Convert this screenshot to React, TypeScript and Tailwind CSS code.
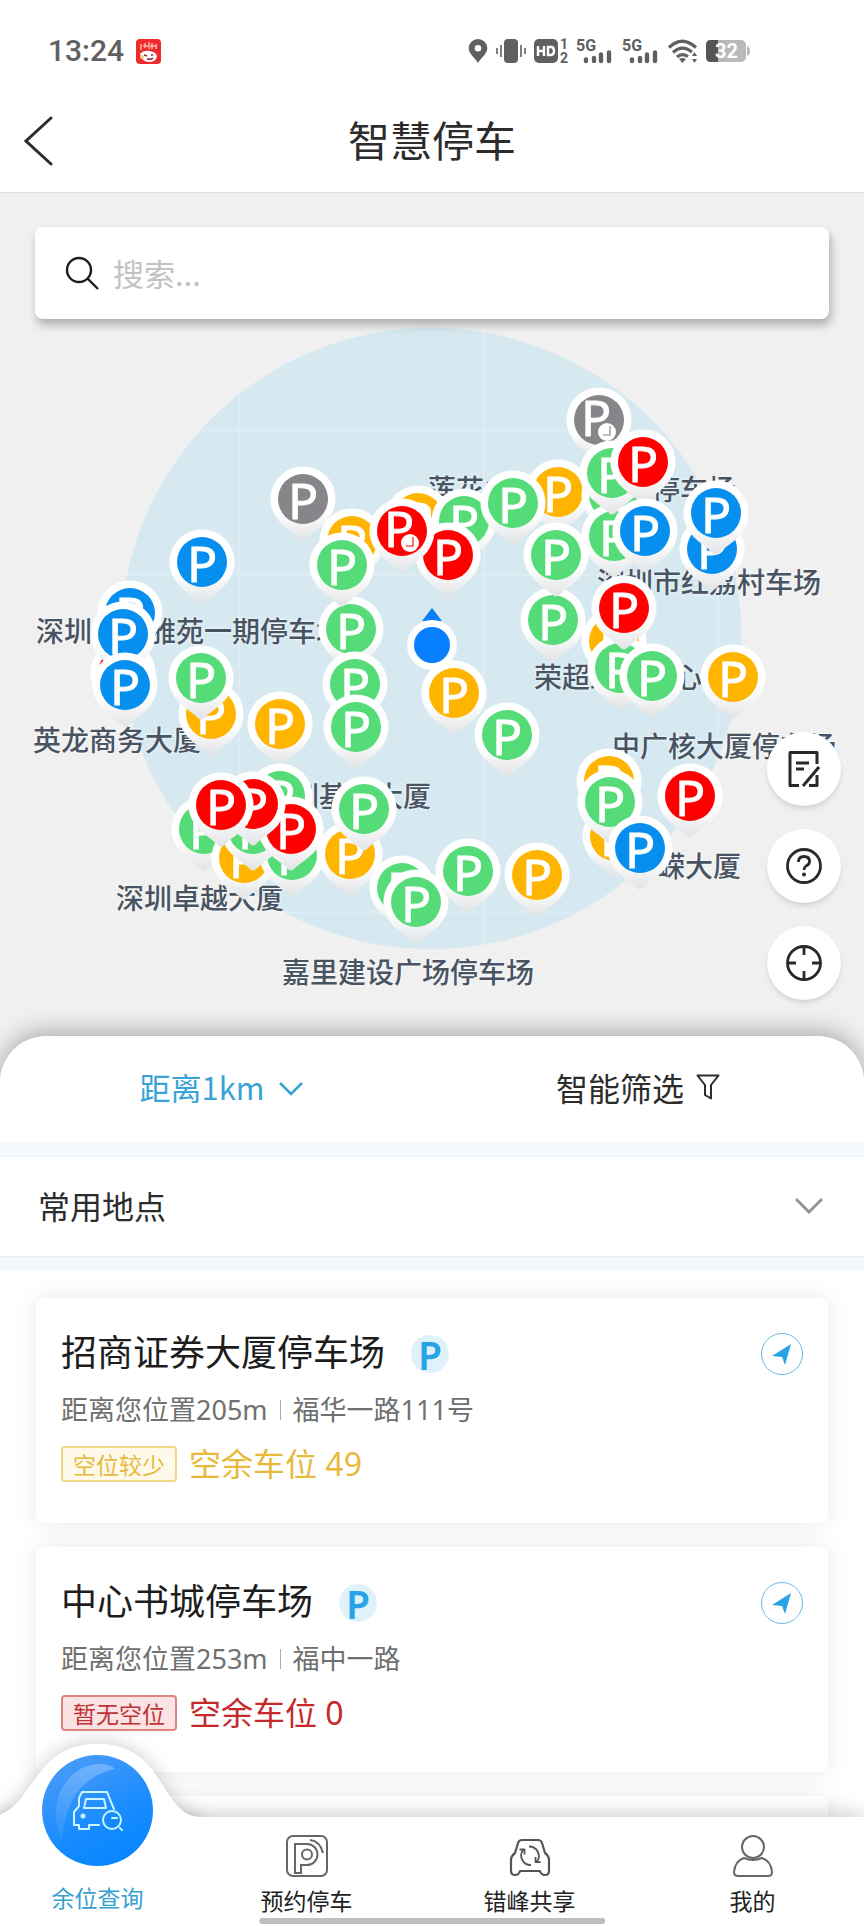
import React from "react";

type Kind = "blue" | "green" | "yellow" | "red" | "gray";
type Pin = { x: number; y: number; kind: Kind; timed?: boolean };

const fills: Record<Kind, string> = {
  blue: "#068fee",
  green: "#55db77",
  yellow: "#ffb400",
  red: "#fe0000",
  gray: "#85858a",
};

const pins: Pin[] = [
  { x: 303, y: 498, kind: "gray" },
  { x: 418, y: 517, kind: "yellow" },
  { x: 464, y: 520, kind: "green" },
  { x: 448, y: 554, kind: "red" },
  { x: 352, y: 540, kind: "yellow" },
  { x: 402, y: 530, kind: "red", timed: true },
  { x: 558, y: 491, kind: "yellow" },
  { x: 513, y: 502, kind: "green" },
  { x: 202, y: 561, kind: "blue" },
  { x: 351, y: 628, kind: "green" },
  { x: 342, y: 564, kind: "green" },
  { x: 355, y: 683, kind: "green" },
  { x: 356, y: 726, kind: "green" },
  { x: 123, y: 672, kind: "red" },
  { x: 130, y: 612, kind: "blue" },
  { x: 123, y: 633, kind: "blue" },
  { x: 125, y: 684, kind: "blue" },
  { x: 211, y: 713, kind: "yellow" },
  { x: 201, y: 677, kind: "green" },
  { x: 599, y: 419, kind: "gray", timed: true },
  { x: 614, y: 494, kind: "green" },
  { x: 614, y: 535, kind: "green" },
  { x: 612, y: 472, kind: "green" },
  { x: 643, y: 461, kind: "red" },
  { x: 645, y: 530, kind: "blue" },
  { x: 712, y: 548, kind: "blue" },
  { x: 716, y: 512, kind: "blue" },
  { x: 553, y: 619, kind: "green" },
  { x: 556, y: 554, kind: "green" },
  { x: 614, y: 640, kind: "yellow" },
  { x: 620, y: 667, kind: "green" },
  { x: 624, y: 607, kind: "red" },
  { x: 652, y: 675, kind: "green" },
  { x: 733, y: 676, kind: "yellow" },
  { x: 454, y: 692, kind: "yellow" },
  { x: 280, y: 723, kind: "yellow" },
  { x: 507, y: 734, kind: "green" },
  { x: 280, y: 795, kind: "green" },
  { x: 204, y: 828, kind: "green" },
  { x: 244, y: 857, kind: "yellow" },
  { x: 292, y: 854, kind: "green" },
  { x: 253, y: 828, kind: "green" },
  { x: 291, y: 828, kind: "red" },
  { x: 253, y: 803, kind: "red" },
  { x: 221, y: 804, kind: "red" },
  { x: 350, y: 853, kind: "yellow" },
  { x: 364, y: 808, kind: "green" },
  { x: 402, y: 887, kind: "green" },
  { x: 416, y: 901, kind: "green" },
  { x: 468, y: 870, kind: "green" },
  { x: 537, y: 874, kind: "yellow" },
  { x: 615, y: 835, kind: "yellow" },
  { x: 609, y: 780, kind: "yellow" },
  { x: 610, y: 801, kind: "green" },
  { x: 640, y: 847, kind: "blue" },
  { x: 690, y: 795, kind: "red" },
];

const places = [
  { x: 428, y: 487, name: "莲花山公园东南门停车场" },
  { x: 597, y: 580, name: "深圳市红荔村车场" },
  { x: 36, y: 629, name: "深圳城中雅苑一期停车场" },
  { x: 534, y: 675, name: "荣超经贸中心" },
  { x: 612, y: 744, name: "中广核大厦停车场" },
  { x: 33, y: 738, name: "英龙商务大厦" },
  { x: 263, y: 794, name: "深圳基金大厦" },
  { x: 657, y: 864, name: "嵘大厦" },
  { x: 116, y: 896, name: "深圳卓越大厦" },
  { x: 282, y: 970, name: "嘉里建设广场停车场" },
];

const MAP_TOP = 192;

function MapPin({ pin }: { pin: Pin }) {
  const fill = fills[pin.kind];
  return (
    <svg
      className="absolute h-20 w-[68px]"
      style={{ left: pin.x - 34, top: pin.y - MAP_TOP - 34 }}
      viewBox="-34 -34 68 80"
      aria-hidden="true"
    >
      <path d="M-27 18A32.500 32.500 0 1 1 27 18C22 27 11 32 3 40Q0 43-3 40C-11 32-22 27-27 18Z" fill="url(#pinShade)" />
      <circle r="25" fill={fill} />
      <text
        x={pin.timed ? -18 : -15}
        y={pin.timed ? 16 : 20}
        fontSize="50"
        fontFamily="'Noto Sans', sans-serif"
        fill="#fff"
        stroke="#fff"
        strokeWidth="0.800"
      >
        P
      </text>
      {pin.timed && (
        <g>
          <circle cx="8" cy="12" r="9" fill="#fff" />
          <path d="M11 6V15H4" fill="none" stroke={fill} strokeWidth="1.600" opacity=".7" />
        </g>
      )}
    </svg>
  );
}

function StatusBar() {
  return (
    <div className="flex h-[90px] items-center justify-between pt-3 pr-[114px] pl-12 text-[#606060]">
      <div className="flex items-center gap-3">
        <span className="font-['Roboto',sans-serif] text-[30px] leading-8 font-medium">13:24</span>
        <svg className="h-[25px] w-[25px]" viewBox="0 0 25 25" aria-hidden="true">
          <rect width="25" height="25" rx="4" fill="#ee2a2e" />
          <path d="M5 5v6M9 4v5M7 7h5M13 3v7M16 4v6M20 5v5M14 7h7" stroke="#ffb9ab" strokeWidth="1.500" />
          <path d="M4 15Q8 11 14 12T21 17Q20 23 13 23T4 15Z" fill="#fff" />
          <path d="M8 16l3 1M16 15v2M11 20q4 1 6-1" stroke="#9b2020" strokeWidth="1.500" fill="none" />
          <circle cx="6" cy="18" r="2" fill="#ffcf83" />
        </svg>
      </div>
      <div className="flex items-center gap-2">
        <svg className="h-6 w-5" viewBox="0 0 20 24" fill="currentColor" aria-hidden="true">
          <path fillRule="evenodd" d="M10 0a9.300 9.300 0 0 1 9.300 9.300C19.300 15 13 19 10 24 7 19 .7 15 .7 9.300A9.300 9.300 0 0 1 10 0Zm0 6a3.300 3.300 0 1 0 0 6.600A3.300 3.300 0 0 0 10 6Z" />
        </svg>
        <svg className="h-6 w-[30px]" viewBox="0 0 30 24" fill="currentColor" aria-hidden="true">
          <rect x="8" width="14" height="24" rx="4" />
          <path d="M1 9v6M5 6v12M25 6v12M29 9v6" stroke="currentColor" strokeWidth="1.600" />
        </svg>
        <svg className="h-6 w-[34px] overflow-visible" viewBox="0 0 34 24" aria-hidden="true" fontFamily="Roboto, sans-serif" fontWeight="700">
          <rect width="24" height="24" rx="5" fill="currentColor" />
          <path d="M4 7v10M10 7v10M4 12h6M14 8h3q3 0 3 4t-3 4h-3Z" fill="none" stroke="#fff" strokeWidth="2.400" />
          <text x="26" y="10" fontSize="14" fill="currentColor">1</text>
          <text x="26" y="24" fontSize="14" fill="currentColor">2</text>
        </svg>
        {[0, 1].map((n) => (
          <svg key={n} className="h-6 w-[38px] overflow-visible" viewBox="0 0 38 24" fill="currentColor" aria-hidden="true">
            <text x="0" y="12" fontSize="16" fontWeight="700" fontFamily="Roboto, sans-serif">5G</text>
            <path d="M10 20.500v1.500M18 19v3M25 15.500V22M33 13.500V22" stroke="currentColor" strokeWidth="4.400" strokeLinecap="round" />
          </svg>
        ))}
        <svg className="h-6 w-[30px]" viewBox="0 0 30 24" fill="none" stroke="currentColor" strokeWidth="3.200" aria-hidden="true">
          <path d="M1 8.500Q14 -4 28 8.500M5 13.500Q14 5 24 13M9 18Q14 13.500 20 17.500" />
          <path d="M11 20q4-2 7 0l-3.500 4Z" fill="currentColor" stroke="none" />
          <path d="M26.500 13l2.500 4h-5zM26.500 24l2.500-4h-5z" fill="currentColor" stroke="none" />
        </svg>
        <svg className="h-[22px] w-11" viewBox="0 0 44 22" aria-label="32">
          <rect width="40" height="22" rx="5" fill="#b9b9b9" />
          <path d="M12 0H5Q0 0 0 5V17Q0 22 5 22H12Z" fill="#555" />
          <path d="M41 6q3 1 3 5t-3 5Z" fill="#b9b9b9" />
          <text x="9" y="18" fontSize="20" fontWeight="700" fontFamily="Roboto, sans-serif" fill="#fff">32</text>
        </svg>
      </div>
    </div>
  );
}

function ParkingMap() {
  return (
    <section aria-label="停车地图" className="relative h-[890px] shrink-0 overflow-hidden border-t border-[#dedede] bg-[#f0f0f0]">
      <div className="absolute inset-y-0 left-1/2 w-[864px] -translate-x-1/2">
        <svg className="absolute h-full w-full" viewBox="0 0 864 890" aria-hidden="true">
          <defs>
            <linearGradient id="pinShade" x1="0" y1="0" x2="0" y2="1">
              <stop offset="0.600" stopColor="#fff" />
              <stop offset="1" stopColor="#e2e3e5" />
            </linearGradient>
          </defs>
          <circle cx="431" cy="446" r="311" fill="#d6e9f1" />
          <path d="M0 238H864M0 382H864M0 720H864M239 0V890M484 0V890M718 0V890" stroke="#fff" strokeWidth="2" opacity=".18" />
        </svg>
        {places.map((p) => (
          <span
            key={p.name}
            className="absolute -translate-y-1/2 text-[28px] leading-8 font-medium whitespace-nowrap text-[#495463] [text-shadow:0_0_3px_#fff]"
            style={{ left: p.x, top: p.y - MAP_TOP }}
          >
            {p.name}
          </span>
        ))}
        {pins.map((p) => (
          <MapPin key={`${p.x}-${p.y}`} pin={p} />
        ))}
        <svg className="absolute top-[414px] left-[406px] h-16 w-[52px]" viewBox="0 0 52 64" aria-hidden="true">
          <path d="M26 1L36 14H16Z" fill="#087fff" />
          <circle cx="26" cy="38" r="25" fill="#fff" />
          <circle cx="26" cy="38" r="18" fill="#087fff" />
        </svg>
      </div>
      <label className="absolute inset-x-[35px] top-[34px] flex h-[92px] items-center gap-[14px] rounded-lg bg-white pl-[30px] shadow-[2px_6px_10px_rgba(0,0,0,0.28)]">
        <svg className="h-[34px] w-[34px] shrink-0" viewBox="0 0 34 34" fill="none" stroke="#1c1c1c" strokeWidth="2.400" aria-hidden="true">
          <circle cx="14" cy="14" r="12" />
          <path d="M22.500 22.500L33 33" />
        </svg>
        <input type="search" aria-label="搜索" placeholder="搜索..." className="w-full bg-transparent text-[31px] leading-10 outline-none placeholder:text-[#c2c2c2]" />
      </label>
      <div className="absolute right-[23px] bottom-[82px] flex flex-col gap-[23px]">
        <button aria-label="反馈" className="grid h-[74px] w-[74px] place-items-center rounded-full bg-white shadow-md">
          <svg className="h-9 w-8" viewBox="0 0 32 36" fill="none" stroke="#292929" strokeWidth="3" aria-hidden="true">
            <path d="M29 13V1.500H2V34.500H11M8 12H21M8 18H16M31 16L15 35M29 24V34.500H21" strokeLinejoin="round" />
          </svg>
        </button>
        <button aria-label="帮助" className="grid h-[74px] w-[74px] place-items-center rounded-full bg-white shadow-md">
          <svg className="h-9 w-9" viewBox="0 0 36 36" fill="none" stroke="#292929" strokeWidth="2.800" aria-hidden="true">
            <circle cx="18" cy="18" r="16.500" />
            <path d="M12.500 14Q12.500 8.500 18 8.500T23.500 13.500Q23.500 16.500 20 18Q18 19.500 18 22" />
            <circle cx="18" cy="26.500" r="2" fill="#292929" stroke="none" />
          </svg>
        </button>
        <button aria-label="定位" className="grid h-[74px] w-[74px] place-items-center rounded-full bg-white shadow-md">
          <svg className="h-9 w-9" viewBox="0 0 36 36" fill="none" stroke="#292929" strokeWidth="2.800" aria-hidden="true">
            <circle cx="18" cy="18" r="16.500" />
            <path d="M18 2V10M18 26V34M2 18H10M26 18H34" />
          </svg>
        </button>
      </div>
    </section>
  );
}

type Lot = { name: string; distance: string; road: string; tag: string; free: number; tone: "few" | "none" };

const lots: Lot[] = [
  { name: "招商证券大厦停车场", distance: "205m", road: "福华一路111号", tag: "空位较少", free: 49, tone: "few" },
  { name: "中心书城停车场", distance: "253m", road: "福中一路", tag: "暂无空位", free: 0, tone: "none" },
];

const tones = {
  few: { tag: "border-[#f0d586] bg-[#fef9e9] text-[#e6b93f]", text: "text-[#e8b93a]" },
  none: { tag: "border-[#dc8583] bg-[#fbe3e3] text-[#c03236]", text: "text-[#c6282c]" },
};

function LotCard({ lot }: { lot: Lot }) {
  const tone = tones[lot.tone];
  return (
    <article className="h-[225px] shrink-0 rounded-lg bg-white px-[25px] pt-[30px] shadow-[0_0_24px_rgba(0,0,0,0.09)]">
      <div className="flex h-11 items-center">
        <h2 className="text-[36px] leading-11 text-[#1d1d1d]">{lot.name}</h2>
        <span className="mt-2 ml-[26px] grid h-[38px] w-[38px] place-items-center rounded-full bg-[#dff2fc] font-['Noto_Sans',sans-serif] text-[39px] leading-10 font-semibold text-[#28a4e4]">
          P
        </span>
        <button aria-label={`导航到${lot.name}`} className="mt-2 ml-auto grid h-[42px] w-[42px] place-items-center rounded-full border border-[#6cbbe0]">
          <svg className="h-6 w-6" viewBox="0 0 24 24" fill="#28a4e4" aria-hidden="true">
            <path d="M21 2L2 14L12 15L15 23Z" />
          </svg>
        </button>
      </div>
      <p className="mt-[18px] flex items-center font-['Noto_Sans','Noto_Sans_CJK_SC',sans-serif] text-[27px] leading-10 text-[#707070]">
        <span>距离您位置{lot.distance}</span>
        <span className="mx-3 h-5 w-px bg-[#aaa]" />
        <span>{lot.road}</span>
      </p>
      <p className="mt-4 flex items-center gap-3">
        <span className={`rounded border-2 px-2.5 text-[23px] leading-8 ${tone.tag}`}>{lot.tag}</span>
        <span className={`font-['Noto_Sans','Noto_Sans_CJK_SC',sans-serif] text-[32px] leading-9 ${tone.text}`}>空余车位 {lot.free}</span>
      </p>
    </article>
  );
}

function TabBar() {
  const tab = "flex flex-[224] flex-col items-center gap-[9px] pb-[12px] text-[23px] leading-7 text-[#222]";
  return (
    <nav className="relative z-10 flex h-[109px] shrink-0 items-end bg-white shadow-[0_-4px_18px_rgba(0,0,0,0.18)]">
      <svg className="absolute -top-[77px] left-0 h-[78px] w-[202px] overflow-visible" viewBox="0 0 202 78" aria-hidden="true">
        <defs>
          <clipPath id="aboveBar">
            <rect x="0" y="-30" width="260" height="107" />
          </clipPath>
        </defs>
        <g clipPath="url(#aboveBar)">
          <path
            className="drop-shadow-[0_-2px_9px_rgba(0,0,0,0.18)]"
            d="M-20 78L0 75C20 67 27 47 43 29C58 10 77 4 98 4C119 4 138 11 153 31C169 52 177 77 200 77V100H-20Z"
            fill="#fff"
          />
        </g>
        <path d="M0 75C20 67 27 47 43 29C58 10 77 4 98 4C119 4 138 11 153 31C169 52 177 77 200 77V90H0Z" fill="#fff" />
      </svg>
      <a href="#availability" className="relative flex flex-[196] flex-col items-center gap-[17px] pb-[15px] text-[23px] leading-7 text-[#36a1cf]">
        <svg className="h-[111px] w-[111px]" viewBox="0 0 111 111" aria-hidden="true">
          <defs>
            <linearGradient id="disc" x1="0.200" y1="0" x2="0.700" y2="1">
              <stop offset="0" stopColor="#4b9bf8" />
              <stop offset="0.650" stopColor="#168bff" />
              <stop offset="1" stopColor="#0785ff" />
            </linearGradient>
            <linearGradient id="gloss" x1="0.600" y1="0" x2="0.200" y2="1">
              <stop offset="0" stopColor="#fff" stopOpacity=".26" />
              <stop offset="1" stopColor="#fff" stopOpacity=".06" />
            </linearGradient>
          </defs>
          <circle cx="55.500" cy="55.500" r="55.500" fill="url(#disc)" />
          <path d="M20 84C2 50 25 9 57 9Q69 9 73 14C45 20 24 40 20 84Z" fill="url(#gloss)" />
          <g fill="none" stroke="#c8f5ff" strokeWidth="2" strokeLinejoin="round" strokeLinecap="round">
            <path d="M57 70H47V74H37V70H32V57L37 51V43L40 37H65L69 47L72 54" />
            <path d="M42 53L44 44H62L64 53Z" />
            <circle cx="41" cy="61" r="1.500" fill="#c8f5ff" />
            <circle cx="70" cy="65" r="9" />
            <path d="M70 63H75M78 73L80 75" />
          </g>
        </svg>
        <span>余位查询</span>
      </a>
      <a href="#reserve" className={tab}>
        <svg className="h-[42px] w-[42px]" viewBox="0 0 42 42" fill="none" stroke="#666" strokeWidth="2" aria-hidden="true">
          <rect x="1" y="1" width="40" height="40" rx="6" />
          <path d="M9 9H21A10.500 10.500 0 0 1 21 30H15V38H9Z" />
          <circle cx="21" cy="19.500" r="5" />
          <path d="M24 5Q34 6 37 18" />
        </svg>
        <span>预约停车</span>
      </a>
      <a href="#share" className={tab}>
        <svg className="h-[42px] w-[42px]" viewBox="0 0 42 42" fill="none" stroke="#555" strokeWidth="2.200" strokeLinejoin="round" aria-hidden="true">
          <path d="M13 5H29Q32 5 33 8L36 18Q40 21 40 25V36Q40 40 36 40T31 36H11Q10 40 6 40T2 36V25Q2 21 6 18L9 8Q10 5 13 5Z" />
          <path d="M22 30A9.500 9.500 0 0 1 14 15M10.500 14.500H15.500V19.500M20 11.500A9.500 9.500 0 0 1 28 26.500M31.500 27H26.500V22" strokeWidth="1.800" />
        </svg>
        <span>错峰共享</span>
      </a>
      <a href="#me" className={tab}>
        <svg className="h-[42px] w-[42px]" viewBox="0 0 42 42" fill="none" stroke="#666" strokeWidth="2" aria-hidden="true">
          <circle cx="21" cy="12" r="11" />
          <path d="M12 23Q21 27 30 23Q39 26 40 37Q40 41 36 41H6Q2 41 2 37Q3 26 12 23Z" />
        </svg>
        <span>我的</span>
      </a>
      <div className="absolute bottom-[2px] left-1/2 h-[6px] w-2/5 -translate-x-1/2 rounded-full bg-[#bfbfbf]" />
    </nav>
  );
}

export default function App() {
  return (
    <div className="flex h-screen flex-col overflow-hidden bg-white font-['Noto_Sans_CJK_SC',sans-serif] text-[#2c2c2c]">
      <StatusBar />
      <header className="grid h-[102px] shrink-0 grid-cols-[80px_1fr_80px] items-center">
        <button aria-label="返回" className="pl-6">
          <svg className="h-[50px] w-[30px]" viewBox="0 0 30 50" fill="none" stroke="#2c2c2c" strokeWidth="3" strokeLinecap="round" aria-hidden="true">
            <path d="M27 2L2 25L27 48" />
          </svg>
        </button>
        <h1 className="pb-1 text-center text-[42px] leading-12">智慧停车</h1>
      </header>
      <ParkingMap />
      <main className="relative -mt-[46px] flex min-h-0 flex-1 flex-col rounded-t-[46px] bg-white shadow-[0_-4px_24px_rgba(0,0,0,0.3)]">
        <div className="grid h-[106px] shrink-0 grid-cols-2 pb-1 text-[32px] leading-10">
          <button className="flex items-center justify-center gap-3 pl-3 text-[#38a4d6]">
            <span className="text-[31px]">距离1km</span>
            <svg className="h-6 w-7" viewBox="0 0 28 24" fill="none" stroke="currentColor" strokeWidth="2.600" aria-hidden="true">
              <path d="M3 8L14 19L25 8" />
            </svg>
          </button>
          <button className="flex items-center justify-center gap-3 pr-5">
            <span>智能筛选</span>
            <svg className="h-[26px] w-6" viewBox="0 0 24 26" fill="none" stroke="currentColor" strokeWidth="2" strokeLinejoin="round" aria-hidden="true">
              <path d="M1.500 1.500H22.500L15 11V24.500L9 21V11Z" />
            </svg>
          </button>
        </div>
        <div className="h-[15px] shrink-0 border-b border-[#e8f0f6] bg-[#f4f9fd]" />
        <button className="flex h-[99px] shrink-0 items-center justify-between pr-10 pb-1 pl-[38px] text-[32px] leading-10">
          <span>常用地点</span>
          <svg className="h-5 w-[30px]" viewBox="0 0 30 20" fill="none" stroke="#929292" strokeWidth="2.800" aria-hidden="true">
            <path d="M2 4L15 17L28 4" />
          </svg>
        </button>
        <div className="h-[14px] shrink-0 border-t border-[#ebf0f4] bg-[#f2f8fd]" />
        <div className="flex min-h-0 flex-1 flex-col gap-6 overflow-hidden px-9 pt-7">
          {lots.map((lot) => (
            <LotCard key={lot.name} lot={lot} />
          ))}
          <div className="h-[225px] shrink-0 rounded-lg bg-white shadow-[0_0_24px_rgba(0,0,0,0.09)]" />
        </div>
      </main>
      <TabBar />
    </div>
  );
}
